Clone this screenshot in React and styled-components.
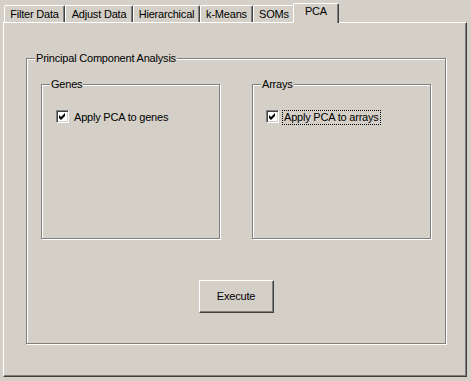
import React from "react";
import styled, { createGlobalStyle } from "styled-components";

const Global = createGlobalStyle`
  html, body { margin: 0; padding: 0; background: #d4d0c8; }
  body {
    font-family: "Liberation Sans", Arial, sans-serif;
    font-size: 11px;
    line-height: 13px;
    letter-spacing: -0.2px;
    color: #000;
  }
`;

const Window = styled.div`
  width: 471px;
  height: 381px;
  padding: 3px 0 0 3px;
  box-sizing: border-box;
  background: #d4d0c8;
`;

const TabStrip = styled.div`
  display: flex;
  align-items: flex-end;
  height: 20px;
  padding-left: 1px;
  margin-bottom: -1px;
  position: relative;
  z-index: 1;
`;

const Tab = styled.div`
  box-sizing: border-box;
  width: ${(p) => (p.$active ? p.$w + 4 : p.$w)}px;
  height: ${(p) => (p.$active ? 20 : 17)}px;
  margin: ${(p) => (p.$active ? "0 -2px 0 -2px" : "0 0 1px 0")};
  padding-top: ${(p) => (p.$active ? 1 : 2)}px;
  text-align: center;
  white-space: nowrap;
  background: #d4d0c8;
  border-top: 1px solid #fff;
  border-left: 1px solid #fff;
  border-right: 1px solid #404040;
  border-radius: 2px 2px 0 0;
  box-shadow: inset -1px 0 0 #808080;
  position: relative;
  z-index: ${(p) => (p.$active ? 2 : 1)};
`;

const Panel = styled.div`
  box-sizing: border-box;
  width: 464px;
  height: 355px;
  border-top: 1px solid #fff;
  border-left: 1px solid #fff;
  border-right: 1px solid #404040;
  border-bottom: 1px solid #404040;
  box-shadow: inset -1px -1px 0 #808080;
  padding: 35px 0 0 22px;
`;

const Frame = styled.div`
  position: relative;
  box-sizing: border-box;
  width: ${(p) => p.$w}px;
  height: ${(p) => p.$h}px;
  border: 1px solid #808080;
  box-shadow: inset 1px 1px 0 #fff, 1px 1px 0 #fff;
  padding: ${(p) => p.$pad};
`;

const FrameLabel = styled.span`
  position: absolute;
  top: -7px;
  left: 8px;
  padding: 0 1px;
  background: #d4d0c8;
  white-space: nowrap;
`;

const GroupRow = styled.div`
  display: flex;
  gap: 32px;
`;

const CheckRow = styled.label`
  display: flex;
  align-items: flex-start;
`;

const Box = styled.span`
  box-sizing: border-box;
  width: 13px;
  height: 13px;
  flex: none;
  background: #fff;
  border-top: 1px solid #808080;
  border-left: 1px solid #808080;
  border-right: 1px solid #fff;
  border-bottom: 1px solid #fff;
  box-shadow: inset 1px 1px 0 #404040, inset -1px -1px 0 #d4d0c8;
  display: flex;
`;

const CheckText = styled.span`
  margin-left: 3px;
  padding: 0 1px;
  border: 1px dotted ${(p) => (p.$focus ? "#000" : "transparent")};
  white-space: nowrap;
`;

const ButtonRow = styled.div`
  display: flex;
  justify-content: center;
  margin-top: 41px;
`;

const Button = styled.button`
  box-sizing: border-box;
  width: 75px;
  height: 33px;
  padding: 0;
  font: inherit;
  letter-spacing: inherit;
  color: #000;
  background: #d4d0c8;
  border-top: 1px solid #fff;
  border-left: 1px solid #fff;
  border-right: 1px solid #404040;
  border-bottom: 1px solid #404040;
  box-shadow: inset -1px -1px 0 #808080;
`;

const Check = () => (
  <svg width="11" height="11" viewBox="0 0 11 11">
    <path d="M2 4 L4 6 L8 2 L8 5 L4 9 L2 7 Z" fill="#000" />
  </svg>
);

function CheckOption({ label, focus }) {
  return (
    <CheckRow>
      <Box>
        <Check />
      </Box>
      <CheckText $focus={focus}>{label}</CheckText>
    </CheckRow>
  );
}

const tabs = [
  { label: "Filter Data", w: 61 },
  { label: "Adjust Data", w: 68 },
  { label: "Hierarchical", w: 67 },
  { label: "k-Means", w: 53 },
  { label: "SOMs", w: 42 },
  { label: "PCA", w: 42, active: true },
];

export default function App() {
  return (
    <>
      <Global />
      <Window>
        <TabStrip>
          {tabs.map((t) => (
            <Tab key={t.label} $w={t.w} $active={t.active}>
              {t.label}
            </Tab>
          ))}
        </TabStrip>
        <Panel>
          <Frame $w={420} $h={286} $pad="25px 14px 0 14px">
            <FrameLabel>Principal Component Analysis</FrameLabel>
            <GroupRow>
              <Frame $w={179} $h={155} $pad="25px 0 0 14px">
                <FrameLabel>Genes</FrameLabel>
                <CheckOption label="Apply PCA to genes" />
              </Frame>
              <Frame $w={179} $h={155} $pad="25px 0 0 13px">
                <FrameLabel>Arrays</FrameLabel>
                <CheckOption label="Apply PCA to arrays" focus />
              </Frame>
            </GroupRow>
            <ButtonRow>
              <Button>Execute</Button>
            </ButtonRow>
          </Frame>
        </Panel>
      </Window>
    </>
  );
}
